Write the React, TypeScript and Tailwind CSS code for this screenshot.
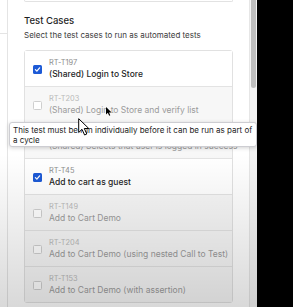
import React from "react";

type TestCase = {
  id: string;
  title: string;
  checked?: boolean;
  disabled?: boolean;
};

const cases: TestCase[] = [
  { id: "RT-T197", title: "(Shared) Login to Store", checked: true },
  { id: "RT-T203", title: "(Shared) Login to Store and verify list", disabled: true },
  { id: "RT-T198", title: "(Shared) Selects that user is logged in success", disabled: true },
  { id: "RT-T45", title: "Add to cart as guest", checked: true },
  { id: "RT-T149", title: "Add to Cart Demo", disabled: true },
  { id: "RT-T204", title: "Add to Cart Demo (using nested Call to Test)", disabled: true },
  { id: "RT-T153", title: "Add to Cart Demo (with assertion)", disabled: true },
];

function Checkbox({ checked, disabled }: { checked?: boolean; disabled?: boolean }) {
  if (checked) {
    return (
      <span className="flex h-[9px] w-[9px] shrink-0 items-center justify-center rounded-[1.5px] bg-[#1d5ad6]">
        <svg viewBox="0 0 10 10" className="h-[7px] w-[7px]">
          <path d="M2 5.2 L4.1 7.3 L8 2.6" fill="none" stroke="white" strokeWidth="1.8" strokeLinecap="round" strokeLinejoin="round" />
        </svg>
      </span>
    );
  }
  return (
    <span
      className={`h-[9px] w-[9px] shrink-0 rounded-[1.5px] border ${
        disabled ? "border-[#cfcfcf] bg-white" : "border-[#8a8a8a] bg-white"
      }`}
    />
  );
}

export default function App() {
  return (
    <div className="relative flex h-[307px] w-[293px] overflow-hidden bg-black font-['Inter',sans-serif]">
      {/* page behind the drawer */}
      <div className="w-[8px] shrink-0 border-r border-[#e4e4e4] bg-white pt-[33px]">
        <div className="h-px bg-[#e4e4e4]" />
      </div>

      {/* drawer */}
      <div className="w-[241px] shrink-0 bg-white px-4">
        <div className="h-[2px] rounded-b-[3px] border border-t-0 border-[#e2e2e2]" />
        <h2 className="mt-[13px] text-[9.5px] font-medium leading-[12px] text-[#1e1e1e]">Test Cases</h2>
        <p className="mt-[3px] whitespace-nowrap text-[8px] leading-[10px] text-[#3b3b3b]">
          Select the test cases to run as automated tests
        </p>

        <div className="mt-[10px] rounded-[3px] border border-[#e1e1e1]">
          {cases.map((c, i) => (
            <div
              key={c.id}
              className={`flex items-center gap-[7px] px-[8px] pb-[6px] pt-[7px] ${
                i > 0 ? "border-t border-[#e3e3e3]" : ""
              } ${c.disabled ? "bg-[#f7f7f7]" : "bg-white"}`}
            >
              <Checkbox checked={c.checked} disabled={c.disabled} />
              <div className="min-w-0">
                <div
                  className={`text-[7.4px] leading-[10px] ${c.disabled ? "text-[#b9b9b9]" : "text-[#8d8d8d]"}`}
                >
                  {c.id}
                </div>
                <div
                  className={`mt-[1px] whitespace-nowrap text-[8.5px] leading-[11px] ${
                    c.disabled ? "text-[#9b9b9b]" : "font-medium text-[#1f1f1f]"
                  }`}
                >
                  {c.title}
                </div>
              </div>
            </div>
          ))}
        </div>
      </div>

      {/* scrollbar */}
      <div className="w-[8px] shrink-0 border-l border-[#e6e6e6] bg-[#f4f4f4] pl-[1px]">
        <div className="h-[88px] w-[5px] rounded-b-full bg-[#bebebe]" />
      </div>

      {/* tooltip */}
      <div className="absolute left-[9px] top-[122px] h-[25px] w-[248px] rounded-[3px] border border-[#cdcdd2] bg-white px-[3px] pt-[3px] text-[8px] leading-[9.5px] text-[#222] shadow-[0_1px_4px_rgba(0,0,0,0.18)]">
        This test must be run individually before it can be run as part of
        <br />a cycle
      </div>

      {/* mouse cursors from the recording */}
      <svg viewBox="0 0 12 18" className="absolute left-[78px] top-[118px] h-[18px] w-[12px]">
        <path d="M0.7 0.7 L0.7 14.5 L4 11.3 L6.6 17 L8.8 16 L6.3 10.5 L10.8 10.5 Z" fill="white" stroke="black" strokeWidth="1" strokeLinejoin="round" />
      </svg>
      <svg viewBox="0 0 6 9" className="absolute left-[106px] top-[107px] h-[9px] w-[6px]">
        <path d="M0 0 L0 7.5 L1.8 5.8 L3.2 8.8 L4.3 8.3 L3 5.4 L5.6 5.4 Z" fill="black" />
      </svg>

      {/* recording vignette */}
      <div className="pointer-events-none absolute inset-0 bg-linear-to-b from-transparent via-transparent to-black/15" />
    </div>
  );
}
